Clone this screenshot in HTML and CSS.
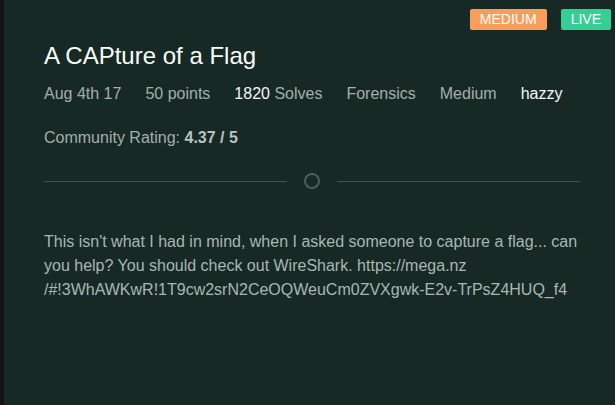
FILE: index.html
```html
<!DOCTYPE html>
<html>
<head>
<meta charset="utf-8">
<link rel="stylesheet" href="styles.css">
</head>
<body>
<div class="strip"></div>
<main class="card">
  <div class="badges">
    <span class="badge badge-medium">MEDIUM</span>
    <span class="badge badge-live">LIVE</span>
  </div>
  <h1 class="title">A CAPture of a Flag</h1>
  <div class="meta">
    <span>Aug 4th 17</span>
    <span>50 points</span>
    <span><span class="hl">1820</span> Solves</span>
    <span>Forensics</span>
    <span>Medium</span>
    <span class="hl">hazzy</span>
  </div>
  <div class="rating">Community Rating: <b>4.37 / 5</b></div>
  <div class="divider">
    <span class="line"></span>
    <span class="circle"></span>
    <span class="line"></span>
  </div>
  <p class="desc">This isn't what I had in mind, when I asked someone to capture a flag... can you help? You should check out WireShark. https://mega.nz<br>/#!3WhAWKwR!1T9cw2srN2CeOQWeuCm0ZVXgwk-E2v-TrPsZ4HUQ_f4</p>
</main>
</body>
</html>
```
FILE: styles.css
```css
html, body {
  margin: 0;
  padding: 0;
  height: 100%;
}
body {
  display: flex;
  background: #172924;
  font-family: "Liberation Sans", Arial, sans-serif;
  color: #a3afab;
}
.strip {
  width: 4px;
  flex: none;
  background: #141417;
}
.card {
  position: relative;
  flex: 1;
  padding: 42px 35px 0 40px;
}
.badges {
  position: absolute;
  top: 9px;
  right: 4px;
  display: flex;
  gap: 14px;
}
.badge {
  display: block;
  height: 21px;
  line-height: 21px;
  padding: 0 10px;
  font-size: 14px;
  color: #fff;
  border-radius: 2px;
}
.badge-medium { background: #f99e5a; }
.badge-live { background: #35cf95; }
.title {
  margin: 0 0 12px;
  font-size: 24px;
  font-weight: normal;
  line-height: 28px;
  color: #fbfdfc;
}
.meta {
  display: flex;
  gap: 24px;
  font-size: 16px;
  line-height: 24px;
}
.hl { color: #f4f7f6; }
.rating {
  margin-top: 20px;
  font-size: 16px;
  line-height: 24px;
}
.rating b { color: #b9c3c0; }
.divider {
  margin-top: 23px;
  display: flex;
  align-items: center;
  gap: 17px;
  height: 16px;
}
.line {
  flex: 1;
  height: 1px;
  background: #3e524c;
}
.circle {
  width: 12px;
  height: 12px;
  border: 2px solid #4b5d58;
  border-radius: 50%;
  flex: none;
}
.desc {
  margin: 41px 0 0;
  font-size: 16px;
  line-height: 24px;
  color: #a7b7b3;
}
```
